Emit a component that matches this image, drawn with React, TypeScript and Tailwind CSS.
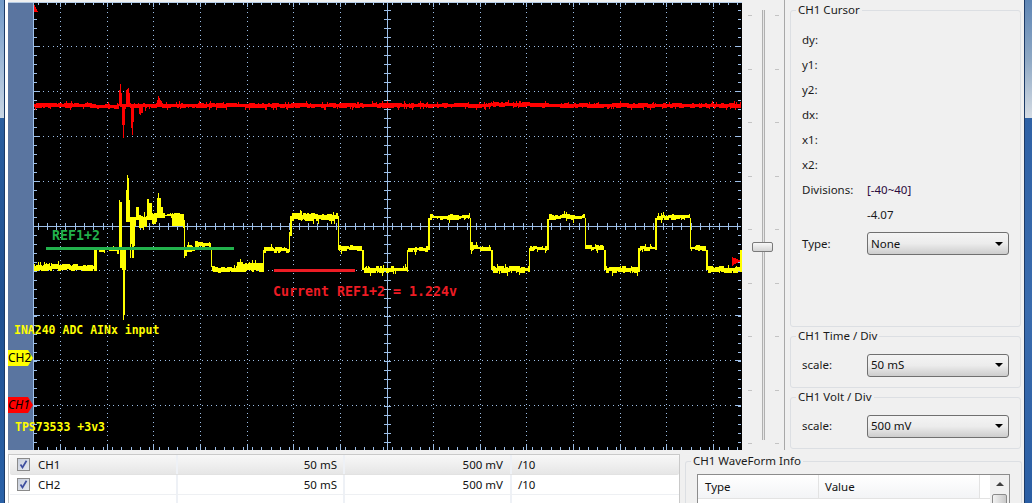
const UI = "font-['Noto_Sans',sans-serif]";

function rng(seed: number) {
  let s = seed;
  return () => {
    s = (s * 1664525 + 1013904223) >>> 0;
    return s / 4294967296;
  };
}

type Seg = [number, number, number, number];

const YELLOW_SEGS: Seg[] = [
  [34, 93, 264, 271], [94, 96, 248, 271], [97, 118, 247, 252],
  [119, 119, 200, 250], [120, 121, 202, 268], [122, 122, 248, 270], [123, 123, 250, 320], [124, 124, 248, 315], [125, 125, 248, 270],
  [126, 126, 190, 222], [127, 127, 175, 222], [128, 128, 178, 222], [129, 129, 200, 222],
  [130, 130, 217, 258], [131, 131, 217, 244], [132, 132, 217, 258], [133, 133, 217, 258], [134, 134, 217, 246], [135, 135, 217, 226],
  [136, 138, 207, 220], [139, 146, 215, 228], [147, 148, 199, 220], [149, 151, 203, 220], [152, 156, 213, 224],
  [157, 157, 198, 218], [158, 158, 193, 218], [159, 160, 198, 218], [161, 162, 207, 218],
  [163, 171, 213, 218], [172, 183, 213, 228], [184, 184, 220, 258], [185, 186, 248, 256],
  [187, 194, 245, 252], [195, 210, 241, 248], [211, 211, 247, 267], [212, 236, 266, 273], [237, 262, 262, 272],
  [263, 263, 250, 272], [264, 288, 247, 253], [289, 289, 232, 252], [290, 291, 216, 236], [292, 337, 213, 221], [338, 338, 216, 250],
  [339, 361, 245, 251], [362, 363, 250, 270], [364, 406, 266, 273], [407, 407, 250, 272], [408, 427, 246, 252], [428, 429, 218, 250],
  [430, 469, 214, 220], [470, 470, 218, 250], [471, 490, 245, 251], [491, 492, 250, 270], [493, 528, 266, 273], [529, 529, 248, 272],
  [530, 546, 246, 251], [547, 548, 219, 250], [549, 584, 214, 220], [585, 585, 218, 249], [586, 603, 245, 251], [604, 605, 250, 270],
  [606, 637, 266, 273], [638, 639, 248, 272], [640, 654, 246, 251], [655, 656, 218, 250], [657, 689, 214, 220], [690, 690, 218, 249],
  [691, 705, 245, 251], [706, 707, 250, 270], [708, 739, 266, 273], [740, 741, 250, 272],
];

function yellowPath() {
  const r = rng(11);
  let d = "";
  for (const [x0, x1, a, b] of YELLOW_SEGS) {
    let t = 0;
    let u = 0;
    for (let x = x0; x <= x1; x++) {
      const wide = x1 - x0 > 3;
      if (wide && r() < 0.4) t = Math.floor(r() * 3);
      if (wide && r() < 0.4) u = Math.floor(r() * 3);
      const spike = wide && r() < 0.06 ? 3 : 0;
      const drop = wide && r() < 0.05 ? 3 : 0;
      d += `M${x + 0.5} ${a + t - spike}V${b - u + drop}`;
    }
  }
  return d;
}

function redPath() {
  const r = rng(5);
  const spikes: Record<number, [number, number]> = {
    119: [90, 106], 120: [84, 107], 121: [93, 107], 122: [104, 125], 123: [104, 138], 124: [104, 125],
    126: [90, 107], 127: [89, 107], 128: [88, 107], 129: [93, 107], 131: [104, 128], 132: [104, 135], 133: [104, 122],
    139: [104, 114], 140: [104, 115], 141: [104, 113], 142: [104, 113], 145: [104, 111],
    157: [100, 107], 158: [96, 107], 159: [98, 107], 160: [100, 107], 161: [101, 107],
  };
  let d = "";
  let t = 0;
  let u = 0;
  for (let x = 34; x < 741; x++) {
    if (spikes[x]) {
      d += `M${x + 0.5} ${spikes[x][0]}V${spikes[x][1]}`;
      continue;
    }
    const drift = x > 95 && x < 130 ? 1 : x > 490 && x < 530 ? -1 : 0;
    if (r() < 0.35) t = Math.floor(r() * 2);
    if (r() < 0.35) u = Math.floor(r() * 2);
    const a = 103 + drift + t - (r() < 0.07 ? 2 : 0);
    const b = 108 + drift - u + (r() < 0.07 ? 2 : 0);
    d += `M${x + 0.5} ${a}V${b}`;
  }
  return d;
}

const VLINES = [60.5, 107.5, 153.5, 200.5, 247.5, 293.5, 340.5, 433.5, 480.5, 526.5, 573.5, 620.5, 666.5, 713.5];
const HLINES = [46.5, 91.5, 136.5, 181.5, 270.5, 315.5, 360.5, 405.5];

function Canvas() {
  const tickX: number[] = [];
  for (let x = 37.5; x < 741; x += 9.33) tickX.push(Math.round(x) + 0.5);
  const tickY: number[] = [];
  for (let y = 10.5; y < 449; y += 9) tickY.push(y);
  const c = "#9dbfe8";
  return (
    <svg className="block w-full h-full" viewBox="34 3 708 447" shapeRendering="crispEdges">
      <rect x="34" y="3" width="708" height="447" fill="#000" />
      {VLINES.map((x) => (
        <line key={x} x1={x} x2={x} y1={3} y2={450} stroke={c} strokeDasharray="1 3.5" />
      ))}
      {HLINES.map((y) => (
        <line key={y} y1={y} y2={y} x1={34} x2={741} stroke={c} strokeDasharray="1 3.67" />
      ))}
      <line x1={387.5} x2={387.5} y1={3} y2={450} stroke={c} />
      <line y1={226.5} y2={226.5} x1={34} x2={741} stroke={c} />
      {tickX.map((x) => (
        <g key={x} stroke={c}>
          <line x1={x} x2={x} y1={3} y2={5} />
          <line x1={x} x2={x} y1={447} y2={450} />
          <line x1={x} x2={x} y1={223} y2={230} />
        </g>
      ))}
      {VLINES.map((x) => (
        <g key={x} stroke={c}>
          <line x1={x} x2={x} y1={3} y2={7} />
          <line x1={x} x2={x} y1={445} y2={450} />
        </g>
      ))}
      {tickY.map((y) => (
        <g key={y} stroke={c}>
          <line y1={y} y2={y} x1={34} x2={37} />
          <line y1={y} y2={y} x1={738} x2={741} />
          <line y1={y} y2={y} x1={384} x2={391} />
        </g>
      ))}
      {HLINES.map((y) => (
        <g key={y} stroke={c}>
          <line y1={y} y2={y} x1={34} x2={39} />
          <line y1={y} y2={y} x1={736} x2={741} />
        </g>
      ))}
      <path d={redPath()} stroke="#ff0000" fill="none" />
      <path d={yellowPath()} stroke="#ffff00" fill="none" />
      <polygon points="34,4 38,12 34,12" fill="#ff0000" />
      <polygon points="732,257 737,259 741,261 737,263 732,266" fill="#ff0000" />
      <rect x="46" y="247" width="188" height="3" fill="#22b14c" />
      <rect x="274" y="269" width="81" height="3" fill="#ed1c24" />
    </svg>
  );
}

function Scope() {
  const mono = "font-['DejaVu_Sans_Mono',monospace] font-bold absolute whitespace-pre leading-none";
  const tag = "absolute left-0 h-[16px] w-[25px] text-[12px] leading-[16px] text-black [clip-path:polygon(0_0,20px_0,25px_50%,20px_100%,0_100%)]";
  return (
    <div className="relative mt-[2px] flex h-[448px] w-[734px] border-t border-[#b5cbe5]">
      <div className="w-[26px] border-r border-[#9dbfe8] bg-[#5a75a0]" />
      <div className="flex-1">
        <Canvas />
      </div>
      <div className={`${tag} top-[347px] bg-[#ffff00]`}>CH2</div>
      <div className={`${tag} top-[394px] bg-[#ff0000] italic`}>CH1</div>
      <span className={`${mono} left-[6px] top-[322px] text-[11.5px] text-[#ffff00]`}>INA240 ADC AINx input</span>
      <span className={`${mono} left-[7px] top-[419px] text-[11.5px] text-[#ffff00]`}>TPS73533 +3v3</span>
      <span className={`${mono} left-[44px] top-[226px] text-[13.3px] text-[#22b14c]`}>REF1+2</span>
      <span className={`${mono} left-[265px] top-[282px] text-[13.3px] text-[#ed1c24]`}>Current REF1+2 = 1.224v</span>
    </div>
  );
}

function Slider() {
  const ys = [0, 1, 2, 3, 4, 5, 6, 7, 8];
  return (
    <div className="relative h-[450px] w-[43px] border-r border-[#a8a8a8]">
      <div className="absolute left-[20px] top-[10px] h-[430px] w-[3px] border-x border-[#b0b0b0] bg-[#e6e6e6]" />
      {ys.map((i) => (
        <div key={i} className="absolute left-0 w-full" style={{ top: 15 + i * 53.5 }}>
          <div className="absolute left-[6px] h-px w-[4px] bg-[#c4c4c4]" />
          <div className="absolute left-[33px] h-px w-[4px] bg-[#c4c4c4]" />
        </div>
      ))}
      <div className="absolute left-[10px] top-[242px] h-[10px] w-[21px] rounded-[2px] border border-[#7a7a7a] bg-gradient-to-b from-[#f8f8f8] to-[#d4d4d4]" />
    </div>
  );
}

function Group({ title, className, children }: { title: string; className: string; children?: React.ReactNode }) {
  return (
    <div className={`relative rounded-[3px] border border-[#dcdfe3] ${className}`}>
      <span className="absolute left-[5px] top-[-9px] bg-[#f0f0f0] px-[2px] text-[11.5px] leading-[16px] text-[#1a1a1a]">{title}</span>
      {children}
    </div>
  );
}

function Select({ value }: { value: string }) {
  return (
    <div className="flex h-[23px] w-[142px] items-center justify-between rounded-[3px] border border-[#707070] bg-gradient-to-b from-[#f4f4f4] via-[#ececec] to-[#cdcdcd] pl-[3px] pr-[5px] text-[11.5px] text-[#111]">
      <span>{value}</span>
      <span className="h-0 w-0 border-x-[4px] border-t-[4px] border-x-transparent border-t-black" />
    </div>
  );
}

function CursorRow({ label, value, tint }: { label: string; value?: string; tint?: boolean }) {
  return (
    <div className="flex h-[25px] items-center text-[11.5px] text-[#1a1a1a]">
      <span className="w-[65px]">{label}</span>
      {value && <span className={tint ? "text-[#2b0a3d]" : ""}>{value}</span>}
    </div>
  );
}

function Panel() {
  return (
    <div className="flex w-[239px] flex-col gap-[9px] pl-[5px] pr-[3px] pt-[10px]">
      <Group title="CH1 Cursor" className="h-[317px] px-[11px] pt-[16px]">
        <CursorRow label="dy:" />
        <CursorRow label="y1:" />
        <CursorRow label="y2:" />
        <CursorRow label="dx:" />
        <CursorRow label="x1:" />
        <CursorRow label="x2:" />
        <CursorRow label="Divisions:" value="[-40~40]" tint />
        <CursorRow label="" value="-4.07" />
        <div className="mt-[5px] flex items-center text-[11.5px] text-[#1a1a1a]">
          <span className="w-[65px]">Type:</span>
          <Select value="None" />
        </div>
      </Group>
      <Group title="CH1 Time / Div" className="flex h-[52px] items-center pl-[11px] pt-[6px] text-[11.5px]">
        <span className="w-[65px] text-[#1a1a1a]">scale:</span>
        <Select value="50 mS" />
      </Group>
      <Group title="CH1 Volt / Div" className="flex h-[52px] items-center pl-[11px] pt-[6px] text-[11.5px]">
        <span className="w-[65px] text-[#1a1a1a]">scale:</span>
        <Select value="500 mV" />
      </Group>
    </div>
  );
}

function Check() {
  return (
    <span className="flex h-[13px] w-[13px] items-center justify-center border border-[#8a8a8a] bg-gradient-to-br from-[#c8cfdc] to-[#e6e9f0]">
      <svg width="9" height="9" viewBox="0 0 9 9">
        <path d="M1.5 4.5L3.5 7.5L7.5 0.8" fill="none" stroke="#3f4f9f" strokeWidth="1.7" />
      </svg>
    </span>
  );
}

function Row({ name, active }: { name: string; active?: boolean }) {
  return (
    <div
      className={`flex h-[20px] items-center border-b text-[11.5px] text-[#111] ${
        active ? "rounded-[2px] border-[#e2e2e2] bg-gradient-to-b from-[#f8f8f8] to-[#e6e6e6]" : "border-[#eef0f3] bg-white"
      }`}
    >
      <div className="flex h-full w-[168px] items-center gap-[8px] border-r-2 border-[#eef1f6] pl-[7px]">
        <Check />
        <span>{name}</span>
      </div>
      <div className="flex h-full w-[167px] items-center justify-end border-r-2 border-[#eef1f6] pr-[6px]">50 mS</div>
      <div className="flex h-full w-[167px] items-center justify-end border-r-2 border-[#eef1f6] pr-[7px]">500 mV</div>
      <div className="pl-[6px]">/10</div>
    </div>
  );
}

function Bottom() {
  return (
    <div className="flex flex-1">
      <div className="mt-[4px] h-[60px] w-[672px] border border-b-0 border-[#c9c9c9] bg-white pl-[1px]">
        <Row name="CH1" active />
        <Row name="CH2" />
        <div className="flex h-[20px]">
          <div className="h-full w-[168px] border-r-2 border-[#eef1f6]" />
          <div className="h-full w-[167px] border-r-2 border-[#eef1f6]" />
          <div className="h-full w-[167px] border-r-2 border-[#eef1f6]" />
        </div>
      </div>
      <Group title="CH1 WaveForm Info" className="ml-[5px] mt-[11px] h-[60px] w-[337px] border-b-0 pl-[11px] pt-[12px]">
        <div className="flex h-[40px] w-[313px] border border-b-0 border-[#8c8c8c] bg-white text-[11.5px] text-[#111]">
          <div className="flex h-[24px] w-[121px] items-center border-b border-r border-[#e3e3e3] bg-gradient-to-b from-white to-[#f3f4f6] pl-[7px]">Type</div>
          <div className="flex h-[24px] w-[161px] items-center border-b border-r border-[#e3e3e3] bg-gradient-to-b from-white to-[#f3f4f6] pl-[6px]">Value</div>
          <div className="h-[24px] w-[10px] border-b border-[#e3e3e3]" />
          <div className="flex w-[19px] flex-col items-center bg-[#f0f0f0]">
            <span className="mt-[7px] h-0 w-0 border-x-[4px] border-b-[4px] border-x-transparent border-b-[#404040]" />
            <span className="mt-[8px] h-[20px] w-[15px] rounded-[2px] border border-[#8a8a8a] bg-gradient-to-r from-[#f2f2f2] to-[#c8c8c8]" />
          </div>
        </div>
      </Group>
    </div>
  );
}

export default function App() {
  return (
    <div className={`flex h-[503px] w-[1032px] overflow-hidden bg-[#f0f0f0] ${UI}`}>
      <div className="flex w-[5px] flex-col border-r border-[#1c3a66]">
        <div className="h-[118px] bg-gradient-to-b from-[#7199c8] to-[#c9d6e4]" />
        <div className="flex-1 bg-gradient-to-b from-[#2a5e9f] via-[#1f4f90] to-[#2a62a8]" />
      </div>
      <div className="w-[3px] bg-white" />
      <div className="flex min-w-0 flex-1 flex-col">
        <div className="flex h-[450px]">
          <Scope />
          <Slider />
          <Panel />
        </div>
        <Bottom />
      </div>
      <div className="flex w-[8px] flex-col border-l border-[#1c3a66]">
        <div className="h-[118px] bg-gradient-to-b from-[#5f86b5] via-[#8ea8c4] to-[#d5dce4]" />
        <div className="flex-1 bg-gradient-to-b from-[#2f62a6] via-[#3a6cae] to-[#2a5ea4]" />
      </div>
    </div>
  );
}
